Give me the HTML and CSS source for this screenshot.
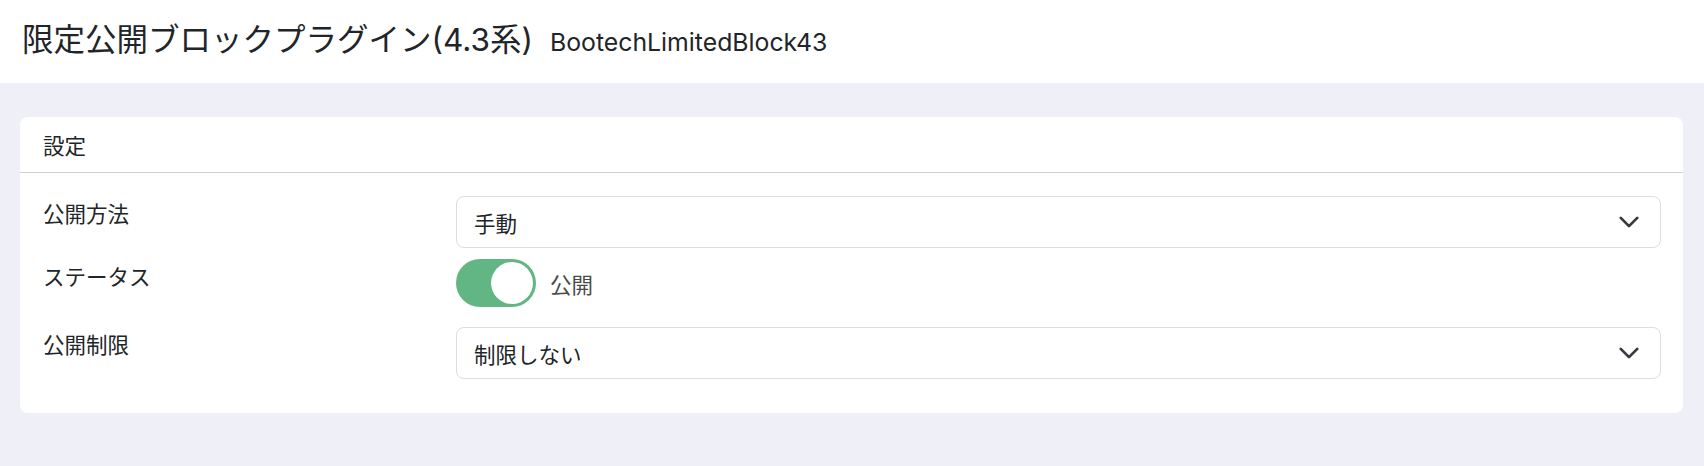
FILE: index.html
```html
<!DOCTYPE html>
<html lang="ja">
<head>
<meta charset="utf-8">
<title>限定公開ブロックプラグイン(4.3系)</title>
<link rel="stylesheet" href="styles.css">
</head>
<body>
<header class="page-header">
  <h1 class="page-title">限定公開ブロックプラグイン(4.3系)</h1>
  <span class="page-subtitle">BootechLimitedBlock43</span>
</header>
<main class="page-content">
  <section class="card">
    <div class="card-header">設定</div>
    <div class="card-body">
      <div class="form-row">
        <div class="form-label">公開方法</div>
        <div class="form-select">
          <span>手動</span>
          <svg class="chevron" viewBox="0 0 16 16" width="22" height="22"><path d="M2 5l6 6 6-6" fill="none" stroke="#343a40" stroke-width="2" stroke-linecap="round" stroke-linejoin="round"/></svg>
        </div>
      </div>
      <div class="form-row form-row-switch">
        <div class="form-label">ステータス</div>
        <div class="switch-field">
          <div class="switch"><div class="switch-knob"></div></div>
          <span class="switch-text">公開</span>
        </div>
      </div>
      <div class="form-row">
        <div class="form-label">公開制限</div>
        <div class="form-select">
          <span>制限しない</span>
          <svg class="chevron" viewBox="0 0 16 16" width="22" height="22"><path d="M2 5l6 6 6-6" fill="none" stroke="#343a40" stroke-width="2" stroke-linecap="round" stroke-linejoin="round"/></svg>
        </div>
      </div>
    </div>
  </section>
</main>
</body>
</html>
```
FILE: styles.css
```css
* { box-sizing: border-box; }
html, body { margin: 0; padding: 0; }
body {
  background: #efeff8;
  font-family: "Noto Sans CJK JP", "Noto Sans", sans-serif;
  color: #212529;
  font-size: 21.5px;
  height: 466px;
  overflow: hidden;
}
.page-header {
  background: #ffffff;
  height: 83px;
  padding: 0 22px;
  display: flex;
  align-items: baseline;
  gap: 17px;
  padding-top: 18px;
}
.page-title {
  margin: 0;
  font-family: "Inter", "Noto Sans CJK JP", sans-serif;
  font-size: 31.5px;
  font-weight: 400;
  line-height: 44px;
  color: #212529;
}
.page-subtitle {
  font-family: "Inter", "Noto Sans", sans-serif;
  font-size: 24.8px;
  color: #212529;
}
.page-content {
  padding: 34px 21px 0 20px;
}
.card {
  background: #ffffff;
  border-radius: 8px;
}
.card-header {
  padding: 11px 22px 10px 23px;
  line-height: 34px;
  border-bottom: 1px solid #cfcfd6;
  color: #212529;
}
.card-body {
  padding: 23px 22px 23px 23px;
}
.form-row {
  display: grid;
  grid-template-columns: 413px 1fr;
  align-items: start;
  margin-bottom: 11px;
}
.form-row:last-child { margin-bottom: 0; padding-bottom: 11px; }
.form-row-switch { min-height: 57px; }
.form-label {
  line-height: 34px;
  color: #212529;
}
.form-select {
  height: 52px;
  border: 1px solid #dcdce6;
  border-radius: 8px;
  padding: 0 20px 0 17px;
  display: flex;
  align-items: center;
  justify-content: space-between;
}
.chevron { display: block; }
.switch-field {
  display: flex;
  align-items: center;
  gap: 14px;
}
.switch {
  width: 80px;
  height: 48px;
  border-radius: 24px;
  background: #61b683;
  display: flex;
  align-items: center;
  justify-content: flex-end;
  padding: 0 3px;
}
.switch-knob {
  width: 42px;
  height: 42px;
  border-radius: 50%;
  background: #ffffff;
}
.switch-text {
  color: #4a4a4a;
}
```
